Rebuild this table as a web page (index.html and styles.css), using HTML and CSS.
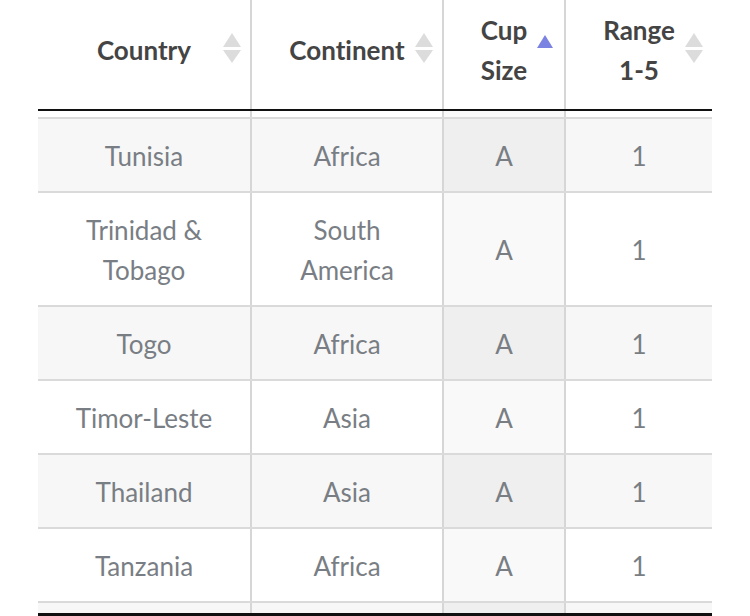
FILE: index.html
```html
<!DOCTYPE html>
<html>
<head>
<meta charset="utf-8">
<link rel="stylesheet" href="styles.css">
</head>
<body>
<div class="table">
  <div class="row head">
    <div class="cell"><span>Country</span><span class="sort"><i class="up"></i><i class="down"></i></span></div>
    <div class="cell"><span>Continent</span><span class="sort"><i class="up"></i><i class="down"></i></span></div>
    <div class="cell"><span>Cup<br>Size</span><span class="sort active"><i class="up"></i></span></div>
    <div class="cell"><span>Range<br>1-5</span><span class="sort"><i class="up"></i><i class="down"></i></span></div>
  </div>
  <div class="row stub"><div class="cell"></div><div class="cell"></div><div class="cell cup"></div><div class="cell"></div></div>
  <div class="row odd"><div class="cell">Tunisia</div><div class="cell">Africa</div><div class="cell cup">A</div><div class="cell">1</div></div>
  <div class="row"><div class="cell">Trinidad &amp;<br>Tobago</div><div class="cell">South<br>America</div><div class="cell cup">A</div><div class="cell">1</div></div>
  <div class="row odd"><div class="cell">Togo</div><div class="cell">Africa</div><div class="cell cup">A</div><div class="cell">1</div></div>
  <div class="row"><div class="cell">Timor-Leste</div><div class="cell">Asia</div><div class="cell cup">A</div><div class="cell">1</div></div>
  <div class="row odd"><div class="cell">Thailand</div><div class="cell">Asia</div><div class="cell cup">A</div><div class="cell">1</div></div>
  <div class="row"><div class="cell">Tanzania</div><div class="cell">Africa</div><div class="cell cup">A</div><div class="cell">1</div></div>
  <div class="row odd stub-bottom"><div class="cell"></div><div class="cell"></div><div class="cell cup"></div><div class="cell"></div></div>
</div>
</body>
</html>
```

FILE: styles.css
```css
html, body {
  margin: 0;
  padding: 0;
  background: #ffffff;
}

body {
  font-family: Lato, "Open Sans", sans-serif;
  font-variant-ligatures: none;
  overflow: hidden;
  height: 616px;
}

.table {
  margin-left: 38px;
  width: 674px;
}

.row {
  display: grid;
  grid-template-columns: 212px 192px 122px 148px;
  border-top: 2px solid #dadada;
  background: #ffffff;
}

.row.odd {
  background: #f7f7f7;
}

.cell {
  position: relative;
  display: flex;
  align-items: center;
  justify-content: center;
  text-align: center;
  font-size: 26px;
  line-height: 40px;
  color: #797e84;
  padding: 17px 0 15px 0;
}

.cell + .cell {
  border-left: 2px solid #d6d6d6;
}

.cell.cup {
  background: #f9f9f9;
}

.row.odd .cell.cup {
  background: #efefef;
}

.row.head {
  border-top: none;
  border-bottom: 2px solid #111111;
  height: 109px;
}

.row.head .cell {
  padding: 1px 0 10px 0;
  font-weight: 700;
  color: #444444;
}

.row.stub {
  border-top: none;
  height: 6px;
}

.row.stub .cell,
.row.stub-bottom .cell {
  padding: 0;
}

.row.stub-bottom {
  height: 10px;
  border-bottom: 3px solid #111111;
}

.sort {
  position: absolute;
  right: 9px;
  top: 33px;
  width: 18px;
  height: 30px;
  display: flex;
  flex-direction: column;
  justify-content: space-between;
}

.sort i {
  display: block;
  width: 0;
  height: 0;
  border-left: 9px solid transparent;
  border-right: 9px solid transparent;
}

.sort .up {
  border-bottom: 14px solid #dcdcdc;
}

.sort .down {
  border-top: 13px solid #dcdcdc;
}

.sort.active {
  top: 35px;
  justify-content: flex-start;
}

.sort.active .up {
  border-left-width: 8px;
  border-right-width: 8px;
  border-bottom: 13px solid #7b83e2;
}
```
